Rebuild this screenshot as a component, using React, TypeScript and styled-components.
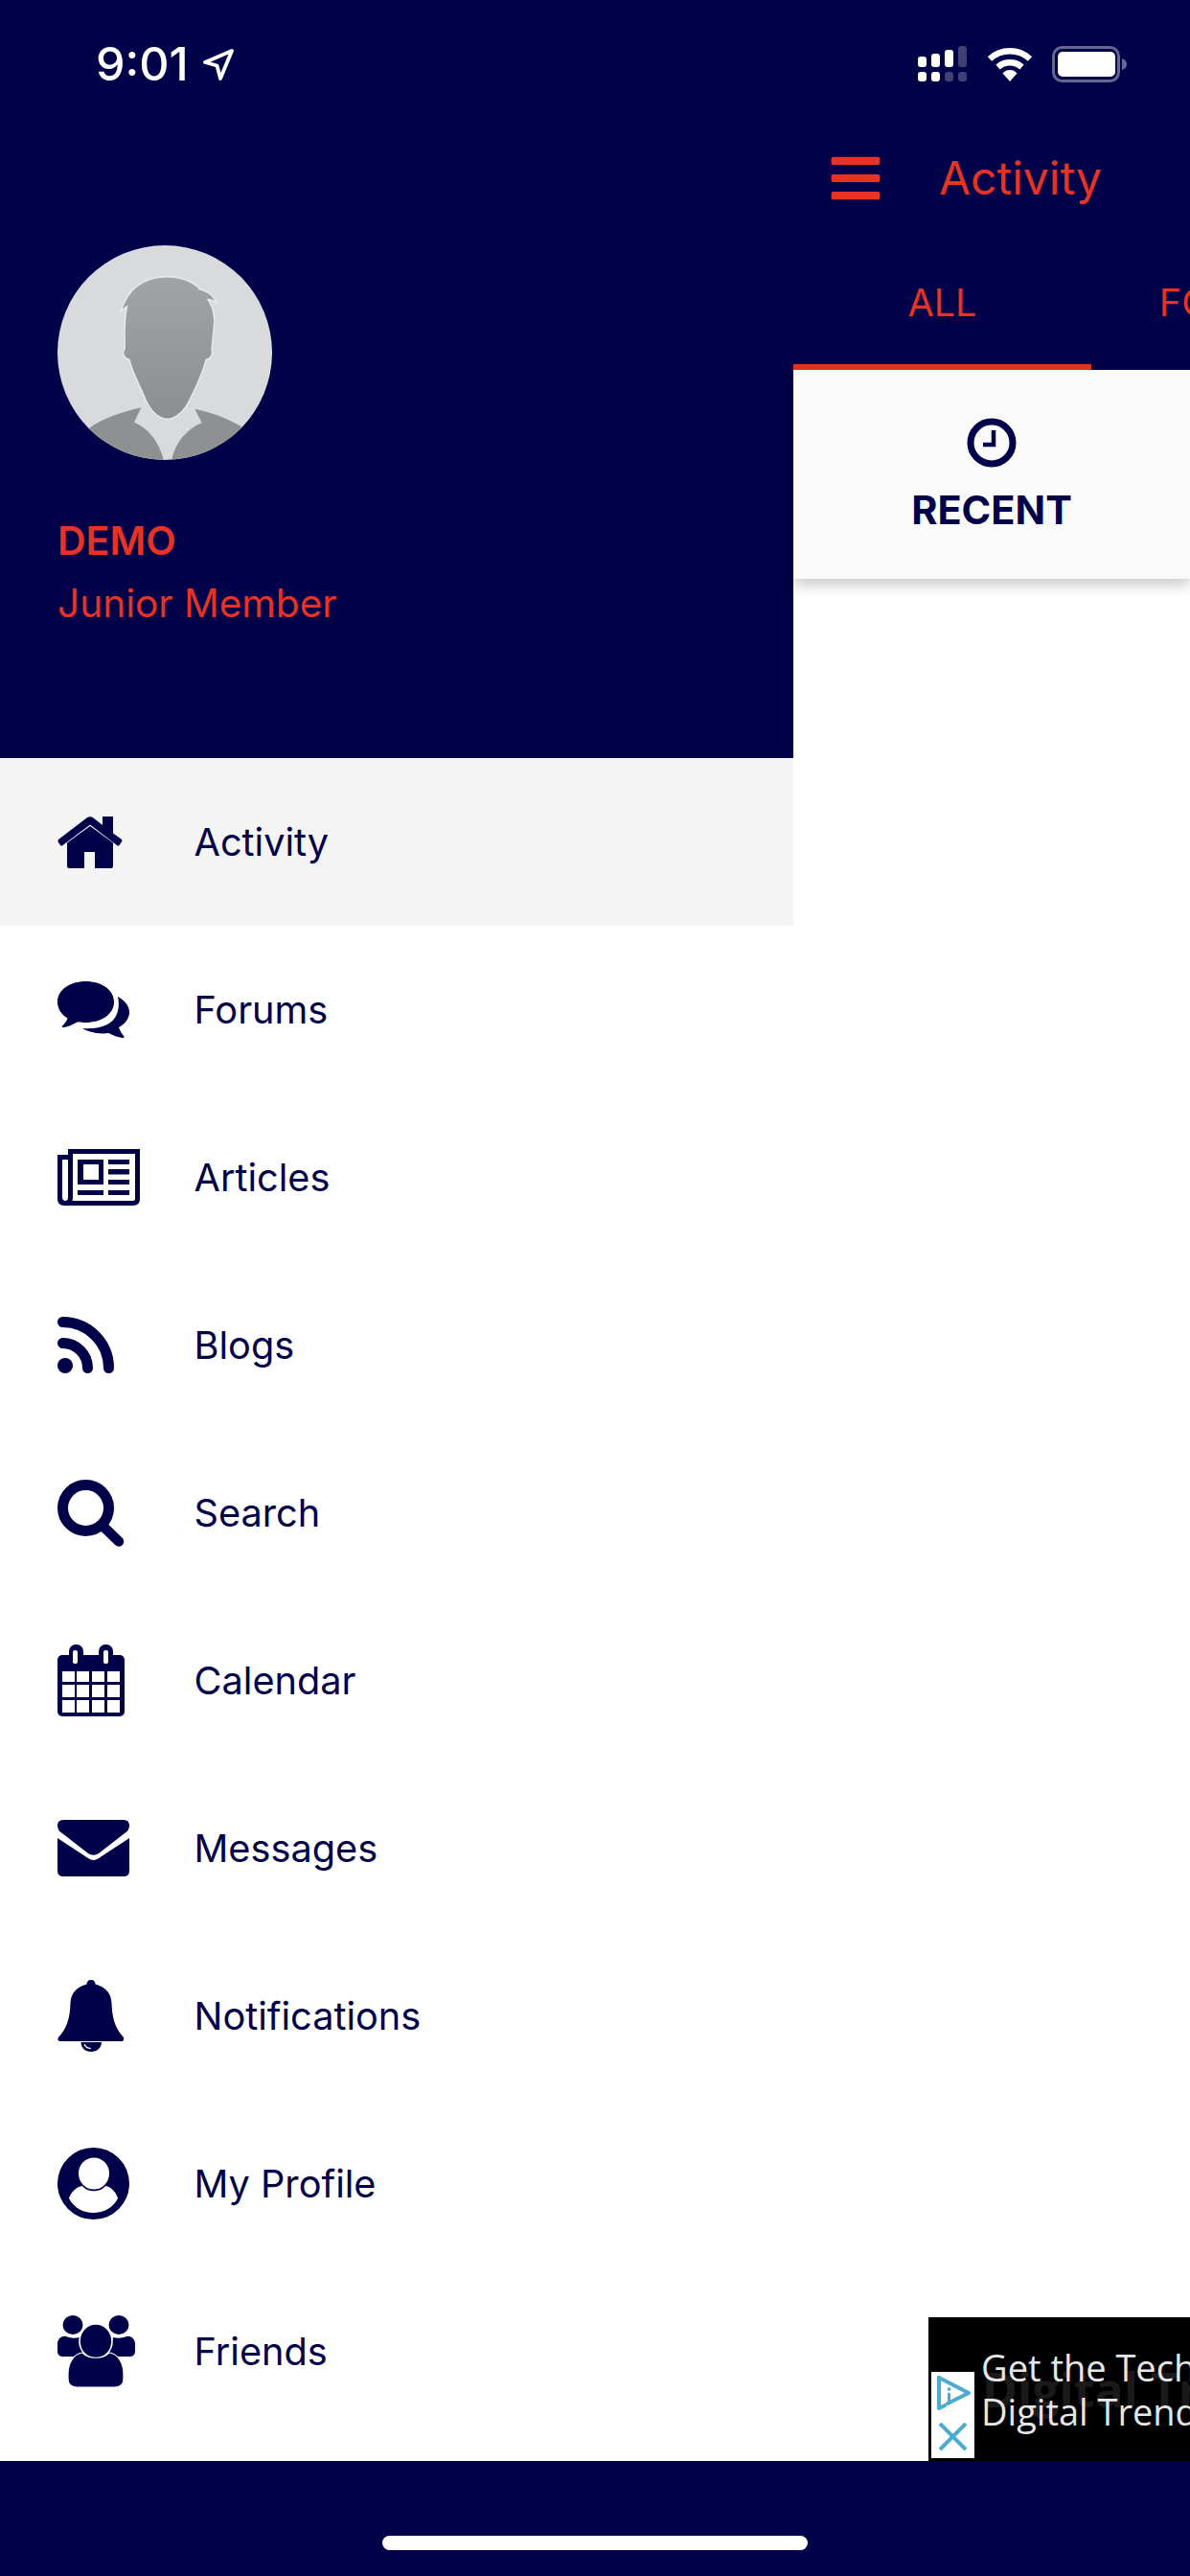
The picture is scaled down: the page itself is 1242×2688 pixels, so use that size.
import * as React from 'react';
import styled, { createGlobalStyle } from 'styled-components';
import { FaBars } from 'react-icons/fa';

const NAVY = '#01014a';
const RED = '#e63323';

const GlobalStyle = createGlobalStyle`
  html, body {
    margin: 0;
    padding: 0;
    background: #fff;
  }
  * {
    box-sizing: border-box;
  }
`;

const Screen = styled.div`
  position: relative;
  width: 1242px;
  height: 2688px;
  display: flex;
  flex-direction: column;
  overflow: hidden;
  background: #fff;
  font-family: Inter, 'Liberation Sans', sans-serif;
`;

const StatusBar = styled.div`
  height: 132px;
  flex: none;
  display: flex;
  justify-content: space-between;
  align-items: flex-start;
  padding: 42px 65px 0 100px;
  background: ${NAVY};
  color: #fff;
`;

const Clock = styled.div`
  display: flex;
  align-items: center;
  gap: 14px;
  font-size: 48.5px;
  line-height: 50px;
  font-weight: 500;
`;

const StatusIcons = styled.div`
  display: flex;
  align-items: center;
  gap: 20px;
  padding-top: 6px;
`;

const Body = styled.div`
  flex: 1;
  display: flex;
  min-height: 0;
`;

const Drawer = styled.aside`
  width: 828px;
  flex: none;
  display: flex;
  flex-direction: column;
`;

const Profile = styled.div`
  height: 659px;
  flex: none;
  padding: 124px 60px 0;
  background: ${NAVY};
  color: ${RED};
`;

const Avatar = styled.svg`
  display: block;
  width: 224px;
  height: 224px;
  margin-bottom: 60px;
`;

const Name = styled.div`
  font-size: 41px;
  line-height: 48px;
  font-weight: 600;
  margin-bottom: 18px;
`;

const Rank = styled.div`
  font-size: 40.6px;
  line-height: 48px;
`;

const Menu = styled.nav`
  display: flex;
  flex-direction: column;
`;

const MenuRow = styled.div<{ $active?: boolean }>`
  height: 175px;
  display: flex;
  align-items: center;
  padding-left: 60px;
  background: ${(props) => (props.$active ? '#f4f4f4' : '#fff')};
  color: ${NAVY};
`;

const MenuIcon = styled.div`
  width: 142.500px;
  flex: none;
  display: flex;
  align-items: center;
  svg {
    display: block;
  }
`;

const MenuLabel = styled.span`
  font-size: 39.7px;
  line-height: 48px;
`;

const Main = styled.main`
  flex: 1;
  min-width: 0;
  display: flex;
  flex-direction: column;
`;

const Header = styled.div`
  background: ${NAVY};
  color: ${RED};
`;

const TopBar = styled.div`
  height: 108px;
  display: flex;
  align-items: center;
  gap: 58px;
  padding-left: 36px;
  svg {
    display: block;
  }
`;

const Title = styled.div`
  font-size: 48px;
  line-height: 60px;
`;

const Tabs = styled.div`
  height: 146px;
  display: flex;
  white-space: nowrap;
`;

const Tab = styled.div<{ $active?: boolean }>`
  width: 311px;
  flex: none;
  text-align: center;
  padding-top: 52px;
  font-size: 39.5px;
  line-height: 48px;
  border-bottom: 6px solid ${(props) => (props.$active ? RED : 'transparent')};
`;

const SubTabs = styled.div`
  height: 218px;
  display: flex;
  background: #fafafa;
  box-shadow: 0 6px 14px rgba(0, 0, 0, 0.22);
`;

const SubTab = styled.div`
  width: 414px;
  flex: none;
  display: flex;
  flex-direction: column;
  align-items: center;
  padding-top: 50px;
  gap: 20px;
  color: ${NAVY};
  font-size: 41.500px;
  line-height: 48px;
  font-weight: 700;
  svg {
    display: block;
  }
`;

const HomeStrip = styled.div`
  height: 120px;
  flex: none;
  display: flex;
  justify-content: center;
  padding-top: 78px;
  background: ${NAVY};
`;

const HomeIndicator = styled.div`
  width: 444px;
  height: 15px;
  border-radius: 8px;
  background: #fff;
`;

const Ad = styled.div`
  position: absolute;
  left: 969px;
  right: 0;
  top: 2418px;
  height: 150px;
  overflow: hidden;
  background: #000;
`;

const AdBadge = styled.svg`
  position: absolute;
  left: 3px;
  top: 57px;
  width: 45px;
  height: 90px;
  background: #fff;
`;

const AdGhost = styled.div`
  position: absolute;
  left: 56px;
  top: 40px;
  font-family: 'Open Sans', sans-serif;
  font-size: 50px;
  line-height: 70px;
  font-weight: 700;
  white-space: nowrap;
  color: #1a1a1a;
`;

const AdText = styled.div`
  position: absolute;
  left: 55px;
  top: 29px;
  font-family: 'Open Sans', sans-serif;
  font-size: 38px;
  line-height: 46px;
  white-space: nowrap;
  color: #e6e6e6;
`;

const LocationArrow = () => (
  <svg width="33" height="33" viewBox="0 0 33 33" fill="none">
    <path d="M31 2 3 14 15.500 17.500 19 31Z" stroke="#fff" strokeWidth="3.800" strokeLinejoin="round" />
  </svg>
);

const Signal = () => (
  <svg width="52" height="38" viewBox="0 0 52 38" fill="#fff">
    <rect x="0" y="11" width="9" height="11" rx="3" />
    <rect x="14" y="8" width="9" height="14" rx="3" />
    <rect x="28" y="4" width="9" height="18" rx="3" />
    <rect x="42" y="0" width="9" height="22" rx="3" opacity="0.25" />
    <rect x="0" y="27" width="9" height="10" rx="3" />
    <rect x="14" y="27" width="9" height="10" rx="3" />
    <rect x="28" y="27" width="9" height="10" rx="3" opacity="0.25" />
    <rect x="42" y="27" width="9" height="10" rx="3" opacity="0.25" />
  </svg>
);

const Wifi = () => (
  <svg width="48" height="36" viewBox="0 0 48 36" fill="none" stroke="#fff" strokeWidth="6.400">
    <path d="M3 12.500A31 31 0 0 1 45 12.500" />
    <path d="M11.500 21A19 19 0 0 1 36.500 21" />
    <path d="M16.500 27.500A10 10 0 0 1 31.500 27.500L24 36Z" fill="#fff" stroke="none" />
  </svg>
);

const Battery = () => (
  <svg width="79" height="38" viewBox="0 0 79 38">
    <rect x="1.500" y="1.500" width="68" height="35" rx="9" fill="none" stroke="#fff" strokeOpacity="0.4" strokeWidth="3" />
    <rect x="6" y="6" width="60" height="26" rx="5" fill="#fff" />
    <path d="M73 13C76.500 14 78 16 78 19S76.500 24 73 25Z" fill="#fff" fillOpacity="0.4" />
  </svg>
);

const AvatarArt = () => (
  <Avatar viewBox="60 78 672 672">
    <defs>
      <linearGradient id="face" x1="0" y1="0" x2="0" y2="1">
        <stop offset="0" stopColor="#a1a4a6" />
        <stop offset="1" stopColor="#8c8e90" />
      </linearGradient>
      <clipPath id="round">
        <circle cx="396" cy="414" r="336" />
      </clipPath>
    </defs>
    <g clipPath="url(#round)">
      <rect x="60" y="78" width="672" height="672" fill="#d9dadc" />
      <path
        d="M258 285C272 240 305 178 400 176C450 175 490 195 505 215C530 222 550 232 558 262C548 250 540 248 532 248C548 272 555 300 550 335C548 360 545 385 543 405C550 418 540 432 525 437C515 480 490 530 475 560C460 595 430 622 405 622C375 622 350 595 335 560C315 510 295 480 285 437C268 432 260 415 270 403C272 370 265 330 277 270Z"
        fill="url(#face)"
        stroke="#e6e7e8"
        strokeWidth="5"
      />
      <path d="M160 650C200 620 260 600 322 586L300 632C340 648 380 690 395 760H160Z" fill="#8e9091" />
      <path d="M635 645C590 618 540 600 490 590L512 634C470 650 425 695 416 760H640Z" fill="#8e9091" />
    </g>
  </Avatar>
);

const HomeIcon = () => (
  <svg width="68" height="54" viewBox="0 0 68 54" fill={NAVY}>
    <path d="M1 24 30.500 1.500Q34 -1 37.500 1.500L47 9V0H58V17.500L67 24Q68 25.500 66.500 27L64.500 30Q63.500 31 62 30L34 8.500 5.500 30Q4 31 3 30L1 27Q0 25.500 1 24Z" />
    <path d="M10 27.500 34 10 58 27.500V52Q58 54 56 54H39V37H28V54H12Q10 54 10 52Z" />
  </svg>
);

const ForumsIcon = () => (
  <svg width="75" height="59" viewBox="0 0 75 59" fill={NAVY}>
    <path d="M29.500 0C46 0 59 9 59 21.500S46 43 29.500 43C26.500 43 24 42.800 21.500 42.200C16 45 10 48 5.500 48C4.500 48 4.500 47 5 46.500C7 44.500 9.500 42 10.500 38.500C4 34.500 0 28.500 0 21.500C0 9 13 0 29.500 0Z" />
    <path d="M63 16C70 20 75 25.500 75 32C75 38.500 71 44 64 48C65 52 67.500 55 69.500 57.500C70 58.500 69 59 68 59C63 58.500 58 56.500 53.500 54C48 55 40 54.500 34 52.500C31 51.500 28 50.500 26 49C40 50 52 47 58 40.500C63.500 34.500 65 25 63 16Z" />
  </svg>
);

const ArticlesIcon = () => (
  <svg width="86" height="59" viewBox="0 0 86 59" fill={NAVY}>
    <path
      fillRule="evenodd"
      d="M11 0H86V52Q86 59 79 59H7Q0 59 0 52V6H11ZM5 11V50Q5 54 8.500 54Q11 54 11 50V11ZM16 5V50Q16 52 15.500 54H79Q81 54 81 52V5Z"
    />
    <path fillRule="evenodd" d="M21 11H48V37H21ZM27 16V32H43V16Z" />
    <rect x="53" y="11" width="22" height="5" />
    <rect x="53" y="21" width="22" height="5.500" />
    <rect x="53" y="32" width="22" height="5" />
    <rect x="53" y="43" width="22" height="5" />
    <rect x="21" y="43" width="27" height="5" />
  </svg>
);

const RssIcon = () => (
  <svg width="59" height="59" viewBox="0 0 59 59" fill="none" stroke={NAVY} strokeWidth="11" strokeLinecap="round">
    <path d="M5.500 5.500A48 48 0 0 1 53.500 53.500" />
    <path d="M5.500 27.500A26 26 0 0 1 31.500 53.500" />
    <circle cx="8" cy="51" r="8" fill={NAVY} stroke="none" />
  </svg>
);

const SearchIcon = () => (
  <svg width="70" height="70" viewBox="0 0 70 70" fill="none" stroke={NAVY}>
    <circle cx="29.500" cy="29.500" r="24" strokeWidth="11" />
    <path d="M48 49 64 64.500" strokeWidth="10.500" strokeLinecap="round" />
  </svg>
);

const CalendarIcon = () => (
  <svg width="70" height="75" viewBox="0 0 70 75" fill={NAVY}>
    <rect x="0" y="11" width="70" height="64" rx="5" />
    <rect x="12" y="0" width="15" height="24" rx="7" />
    <rect x="43" y="0" width="15" height="24" rx="7" />
    <g fill="#fff">
      <rect x="16" y="6" width="5" height="14" rx="2" />
      <rect x="48" y="6" width="5" height="14" rx="2" />
      {[5, 20, 36, 52].map((x) => [28, 42, 58].map((y) => (
        <rect key={`${x}-${y}`} x={x} y={y} width="13" height={y === 28 ? 11 : 13} />
      )))}
    </g>
  </svg>
);

const EnvelopeIcon = () => (
  <svg width="75" height="59" viewBox="0 0 75 59" fill={NAVY}>
    <path d="M6 0H69Q75 0 75 6Q75 11 70 14L43 35Q37.500 38.500 32 35L5 14Q0 11 0 6Q0 0 6 0Z" />
    <path d="M0 19 32 40Q37.500 44 43 40L75 19V53Q75 59 69 59H6Q0 59 0 53Z" />
  </svg>
);

const BellIcon = () => (
  <svg width="70" height="75" viewBox="0 0 70 75" fill={NAVY}>
    <path d="M35 0C38 0 39.500 2 39.500 4.500C50 7 56 14 56.500 24C57 40 60 50 69 60Q70 64 66 64H4Q-1 64 1 60C10 50 13 40 13.500 24C14 14 20 7 30.500 4.500C30.500 2 32 0 35 0Z" />
    <path d="M24.500 65H46C46 71 41 75 35 75C29 75 24.500 71 24.500 65Z" />
    <path d="M28 67C29 70 32 71.500 35 71.500" fill="none" stroke="#fff" strokeWidth="1.200" />
  </svg>
);

const ProfileIcon = () => (
  <svg width="75" height="75" viewBox="0 0 75 75">
    <circle cx="37.500" cy="37.500" r="37.500" fill={NAVY} />
    <ellipse cx="38" cy="27" rx="16" ry="16.500" fill="#fff" />
    <path d="M12 53C14 46 20 41 26 40C31 47 45 47 50 40C56 41 61 46 63 53C53 73 22 73 12 53Z" fill="#fff" />
  </svg>
);

const FriendsIcon = () => (
  <svg width="81" height="75" viewBox="0 0 81 75" fill={NAVY}>
    <ellipse cx="16" cy="10" rx="10.500" ry="10" />
    <ellipse cx="64" cy="10" rx="10.500" ry="10" />
    <path d="M0 30C0 24 5 21 9 22C14 24 18 24 23 23L28 43H6C2 43 0 41 0 37Z" />
    <path d="M81 30C81 24 76 21 72 22C67 24 63 24 58 23L53 43H75C79 43 81 41 81 37Z" />
    <ellipse cx="40" cy="27" rx="17" ry="18" stroke="#fff" strokeWidth="1.600" />
    <path d="M11 61C11 50 17 40 26 39C33 46 47 46 54 39C63 40 69 50 69 61V66C69 72 65 75 60 75H20C15 75 11 72 11 66Z" stroke="#fff" strokeWidth="1.200" />
  </svg>
);

const RecentIcon = () => (
  <svg width="52" height="52" viewBox="0 0 52 52" fill="none" stroke={NAVY}>
    <circle cx="26" cy="26" r="22" strokeWidth="7" />
    <path d="M28 13V28H17" strokeWidth="4.500" />
  </svg>
);

const AdChoices = () => (
  <AdBadge viewBox="0 0 45 90" fill="none" stroke="#4aadcf" strokeLinejoin="round" strokeLinecap="round">
    <path d="M8 6 39 22 17 33" strokeWidth="4" />
    <path d="M8 6V38L14 35" strokeWidth="4" />
    <path d="M18.500 23V31" strokeWidth="3" />
    <circle cx="18.500" cy="18" r="1.500" fill="#4aadcf" strokeWidth="0.800" />
    <path d="M9 54 36 81M36 54 9 81" strokeWidth="4" strokeLinecap="butt" />
  </AdBadge>
);

const menuItems = [
  { label: 'Activity', icon: <HomeIcon />, active: true },
  { label: 'Forums', icon: <ForumsIcon /> },
  { label: 'Articles', icon: <ArticlesIcon /> },
  { label: 'Blogs', icon: <RssIcon /> },
  { label: 'Search', icon: <SearchIcon /> },
  { label: 'Calendar', icon: <CalendarIcon /> },
  { label: 'Messages', icon: <EnvelopeIcon /> },
  { label: 'Notifications', icon: <BellIcon /> },
  { label: 'My Profile', icon: <ProfileIcon /> },
  { label: 'Friends', icon: <FriendsIcon /> },
];

const App = () => (
  <Screen>
    <GlobalStyle />
    <StatusBar>
      <Clock>
        9:01
        <LocationArrow />
      </Clock>
      <StatusIcons>
        <Signal />
        <Wifi />
        <Battery />
      </StatusIcons>
    </StatusBar>
    <Body>
      <Drawer>
        <Profile>
          <AvatarArt />
          <Name>DEMO</Name>
          <Rank>Junior Member</Rank>
        </Profile>
        <Menu>
          {menuItems.map((item) => (
            <MenuRow key={item.label} $active={item.active}>
              <MenuIcon>{item.icon}</MenuIcon>
              <MenuLabel>{item.label}</MenuLabel>
            </MenuRow>
          ))}
        </Menu>
      </Drawer>
      <Main>
        <Header>
          <TopBar>
            <FaBars size={58} />
            <Title>Activity</Title>
          </TopBar>
          <Tabs>
            <Tab $active>ALL</Tab>
            <Tab>FORUMS</Tab>
          </Tabs>
        </Header>
        <SubTabs>
          <SubTab>
            <RecentIcon />
            RECENT
          </SubTab>
        </SubTabs>
      </Main>
    </Body>
    <HomeStrip>
      <HomeIndicator />
    </HomeStrip>
    <Ad>
      <AdGhost>Digital Trends</AdGhost>
      <AdText>
        Get the Tech News
        <br />
        Digital Trends
      </AdText>
      <AdChoices />
    </Ad>
  </Screen>
);

export default App;
